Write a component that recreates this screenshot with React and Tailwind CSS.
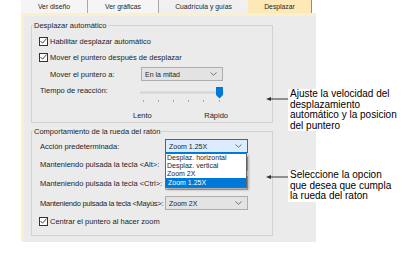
import React from "react";

function Check({ children, className = "" }) {
  return (
    <div className={`flex items-center h-[12px] ${className}`}>
      <span className="w-[9px] h-[9px] border border-[#333] bg-white flex items-center justify-center shrink-0">
        <svg width="7" height="6" viewBox="0 0 7 6">
          <path d="M0.5 3 L2.6 5.2 L6.5 0.6" fill="none" stroke="#444" strokeWidth="1" />
        </svg>
      </span>
      <span className="ml-[2px] whitespace-nowrap">{children}</span>
    </div>
  );
}

function Chevron() {
  return (
    <svg width="7" height="4" viewBox="0 0 7 4" className="shrink-0">
      <polyline points="0.5,0.5 3.5,3.3 6.5,0.5" fill="none" stroke="#666" strokeWidth="0.9" />
    </svg>
  );
}

function Select({ value, focused = false, className = "" }) {
  return (
    <div
      className={`h-[14px] flex items-center justify-between pl-[3px] pr-[5px] border text-[7px] whitespace-nowrap ${
        focused ? "border-[#0078d7] bg-[#dcecfc]" : "border-[#adadad] bg-[#e3e3e3]"
      } ${className}`}
    >
      <span>{value}</span>
      <Chevron />
    </div>
  );
}

function Slider() {
  return (
    <svg width="86" height="18" viewBox="0 0 86 18" className="block">
      <rect x="0" y="5.5" width="84" height="2" fill="#d4d4d4" />
      {[3, 18, 33, 48, 63, 79].map((x) => (
        <rect key={x} x={x} y="14" width="1" height="2" fill="#a9a9a9" />
      ))}
      <path d="M76 1 H83 V9 L79.5 12.5 L76 9 Z" fill="#0078d7" />
    </svg>
  );
}

export default function App() {
  return (
    <div className="w-[411px] h-[256px] bg-white relative overflow-hidden font-['Liberation_Sans',Arial,sans-serif] text-[#1e1e1e] text-[7.5px] leading-[9px]">
      <div className="ml-[21px] w-[295px]">
        {/* Tabs */}
        <div className="flex h-[13px] text-[6.8px]">
          <div className="w-[67px] bg-[#f5f5f5] border-r border-[#a8a8a8] flex items-center justify-center">Ver diseño</div>
          <div className="w-[71px] bg-[#f5f5f5] border-r border-[#a8a8a8] flex items-center justify-center">Ver gráficas</div>
          <div className="w-[89px] bg-[#f0f0f0] flex items-center justify-center">Cuadrícula y guías</div>
          <div className="w-[64px] bg-[#fde9b8] border-r border-[#8c8c8c] flex items-center justify-center">Desplazar</div>
        </div>
        {/* Panel */}
        <div className="h-[229px] bg-[#ebebeb] border-l-[3px] border-t-[3px] border-[#fcefcc] pl-[7px] pt-[9px]">
          {/* Group 1 */}
          <div className="relative w-[242px] h-[98px] border border-[#d2d2d2]">
            <span className="absolute left-[1px] top-[-5px] px-[1px] bg-[#ebebeb] whitespace-nowrap">Desplazar automático</span>
            <div className="pl-[7px] flex flex-col">
              <Check className="mt-[9px]">Habilitar desplazar automático</Check>
              <Check className="mt-[4px]">Mover el puntero después de desplazar</Check>
              <div className="mt-[4px] flex items-center h-[14px]">
                <span className="ml-[11px] w-[91px] whitespace-nowrap">Mover el puntero a:</span>
                <Select value="En la mitad" className="w-[82px]" />
              </div>
              <div className="mt-[3px] flex items-start h-[19px]">
                <span className="ml-[1px] w-[100px] h-[12px] flex items-center whitespace-nowrap">Tiempo de reacción:</span>
                <div className="mt-[2px]">
                  <Slider />
                </div>
              </div>
              <div className="mt-[7px] ml-[94px] w-[95px] h-[10px] flex items-center justify-between">
                <span>Lento</span>
                <span>Rápido</span>
              </div>
            </div>
          </div>
          {/* Group 2 */}
          <div className="relative mt-[8px] w-[242px] h-[105px] border border-[#d2d2d2]">
            <span className="absolute left-[1px] top-[-5px] px-[1px] bg-[#ebebeb] whitespace-nowrap">Comportamiento de la rueda del ratón</span>
            <div className="pl-[8px] flex flex-col">
              <div className="mt-[7px] flex items-center h-[14px]">
                <span className="w-[125px] whitespace-nowrap">Acción predeterminada:</span>
                <div className="relative">
                  <Select value="Zoom 1.25X" focused className="w-[83px]" />
                  <div className="absolute left-0 top-full z-10 w-[82px] bg-white border border-[#646464] shadow-[2px_2px_2px_rgba(0,0,0,0.25)] text-[7px] leading-[8px]">
                    <div className="h-[8px] pl-[1px] flex items-center whitespace-nowrap">Desplaz. horizontal</div>
                    <div className="h-[8px] pl-[1px] flex items-center whitespace-nowrap">Desplaz. vertical</div>
                    <div className="h-[8px] pl-[1px] flex items-center whitespace-nowrap">Zoom 2X</div>
                    <div className="h-[9px] pl-[2px] flex items-center whitespace-nowrap bg-[#0078d7] text-white">Zoom 1.25X</div>
                  </div>
                </div>
              </div>
              <div className="mt-[4px] flex items-center h-[14px]">
                <span className="w-[125px] whitespace-nowrap">Manteniendo pulsada la tecla &lt;Alt&gt;:</span>
                <Select value="" className="w-[83px]" />
              </div>
              <div className="mt-[5px] flex items-center h-[14px]">
                <span className="w-[125px] whitespace-nowrap">Manteniendo pulsada la tecla &lt;Ctrl&gt;:</span>
                <Select value="" className="w-[83px]" />
              </div>
              <div className="mt-[6px] flex items-center h-[14px]">
                <span className="w-[125px] whitespace-nowrap tracking-[-0.25px]">Manteniendo pulsada la tecla &lt;Mayús&gt;:</span>
                <Select value="Zoom 2X" className="w-[83px]" />
              </div>
              <Check className="mt-[5px] -ml-[1px]">Centrar el puntero al hacer zoom</Check>
            </div>
          </div>
        </div>
      </div>

      {/* Callouts */}
      <svg width="24" height="6" viewBox="0 0 24 6" className="absolute left-[266px] top-[96px]">
        <path d="M0 3 L5 1 L5 5 Z" fill="#333" />
        <line x1="4" y1="3" x2="23" y2="3" stroke="#333" strokeWidth="1" />
      </svg>
      <div className="absolute left-[288px] top-[89px] bg-white pl-[2px] pr-[6px] text-[10px] leading-[10.5px] text-black whitespace-nowrap">
        Ajuste la velocidad del<br />desplazamiento<br />automático y la posicion<br />del puntero
      </div>
      <svg width="24" height="6" viewBox="0 0 24 6" className="absolute left-[266px] top-[174px]">
        <path d="M0 3 L5 1 L5 5 Z" fill="#333" />
        <line x1="4" y1="3" x2="23" y2="3" stroke="#333" strokeWidth="1" />
      </svg>
      <div className="absolute left-[288px] top-[170px] bg-white pl-[2px] pr-[6px] text-[10px] leading-[10.5px] text-black whitespace-nowrap">
        Seleccione la opcion<br />que desea que cumpla<br />la rueda del raton
      </div>
    </div>
  );
}
